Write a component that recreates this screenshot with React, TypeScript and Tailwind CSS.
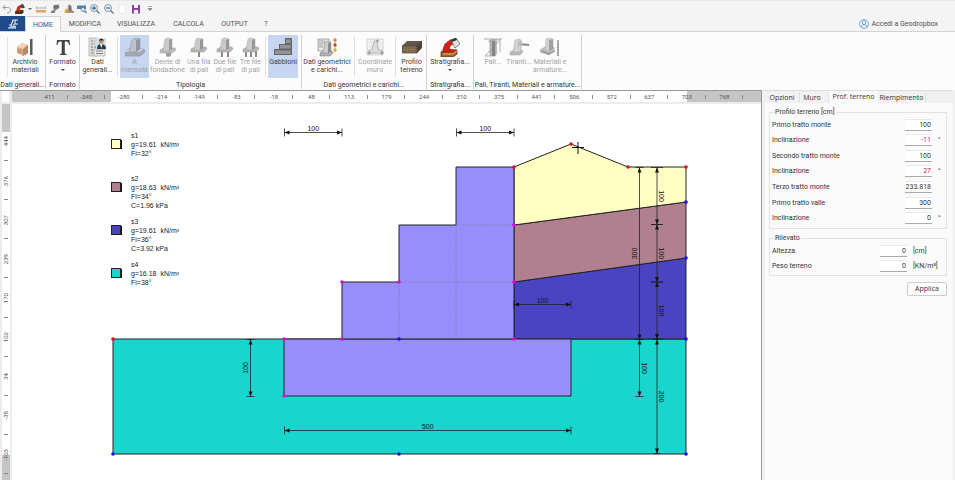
import type { ReactNode } from "react";
import clsx from "clsx";

/* ---------- ribbon icons ---------- */

function Icon({ children, small }: { children: ReactNode; small?: boolean }) {
  return (
    <svg
      viewBox="0 0 20 20"
      className={small ? "h-2.5 w-2.5" : "h-5 w-5"}
      fill="none"
      strokeLinejoin="round"
      aria-hidden="true"
    >
      {children}
    </svg>
  );
}

function WallShape() {
  return (
    <>
      <path d="M0 15 4 12H19L20 15 15 19H0Z" fill="#a3a9b3" stroke="#8d929c" strokeWidth=".6" />
      <path d="M0 15H14L19 12H4Z" fill="#cfd3da" />
      <path d="M7 3 11 1 15 2V12L11 15H4Z" fill="#bcc2cc" stroke="#8d929c" strokeWidth=".6" />
      <path d="M11 3 15 2V12L11 15Z" fill="#8f96a1" />
    </>
  );
}

function PiledWall({ piles }: { piles: number[] }) {
  return (
    <Icon>
      {piles.map((x) => (
        <rect key={x} x={x} y="13" width="2" height="7" fill="#8a8a8a" />
      ))}
      <path d="M2 12 6 10H17L18 12 15 15H2Z" fill="#b5b5b5" stroke="#999" strokeWidth=".5" />
      <path d="M7 2 10 1 14 2V11L11 13H5Z" fill="#cacaca" stroke="#a0a0a0" strokeWidth=".5" />
      <path d="M11 3 14 2V11L11 13Z" fill="#979797" />
    </Icon>
  );
}

const icons = {
  archivio: (
    <Icon>
      <path d="M2 10 7 6 13 8 13 16 8 19 2 15Z" fill="#d6ab83" />
      <path d="M2 10 8 12 13 8 7 6Z" fill="#efd3b4" />
      <path d="M8 12V19L13 16 13 8Z" fill="#b98760" />
      <circle cx="4.500" cy="14.500" r="2.500" fill="#c79a72" />
      <path d="M15 2H17.500V18H15Z" fill="#555" />
      <path d="M16 2V18" stroke="#888" strokeDasharray="1 1" strokeWidth=".6" />
    </Icon>
  ),
  formato: (
    <Icon>
      <path
        d="M4 3H16.500L17 8H16C15.500 5.500 15 4.500 13 4.500H11.800V15.500C11.800 17 12.300 17 13.700 17.300V18H6.800V17.300C8.200 17 8.700 17 8.700 15.500V4.500H7.500C5.500 4.500 5 5.500 4.500 8H3.500Z"
        fill="#454545"
      />
    </Icon>
  ),
  dati: (
    <Icon>
      <path d="M1 1H9V19H1Z" fill="#ddd" stroke="#aaa" strokeWidth=".7" />
      <path d="M3 4H7M3 7H7M3 10H8M3 13H15M3 16H15" stroke="#777" strokeDasharray="2 1" />
      <path d="M6 12H17V19H6Z" fill="#e8e8e8" stroke="#999" strokeWidth=".6" />
      <path d="M8 14H15M8 16.500H15" stroke="#666" strokeWidth=".8" />
      <path d="M8 1H18V12H8Z" fill="#cfe0ec" />
      <path d="M9 12C9 8 11 7 13 7S18 8 18 12Z" fill="#29394a" />
      <path d="M12 7H14.500L13.300 11Z" fill="#fff" />
      <circle cx="13.300" cy="4.500" r="2.300" fill="#c98a62" />
      <path d="M11 4C11 1 16 1 15.600 4L14 3Z" fill="#222" />
    </Icon>
  ),
  mensola: (
    <Icon>
      <WallShape />
    </Icon>
  ),
  dente: (
    <Icon>
      <path d="M8 15H13V19L10 20 8 19Z" fill="#a0a0a0" />
      <path d="M2 13 6 11H17L18 13 14 16H2Z" fill="#bcbcbc" stroke="#999" strokeWidth=".5" />
      <path d="M7 2 10 1 14 2V12L11 14H5Z" fill="#cacaca" stroke="#a0a0a0" strokeWidth=".5" />
      <path d="M11 3 14 2V12L11 14Z" fill="#9d9d9d" />
    </Icon>
  ),
  unaFila: <PiledWall piles={[9]} />,
  dueFile: <PiledWall piles={[6, 12]} />,
  treFile: <PiledWall piles={[4, 9, 14]} />,
  gabbioni: (
    <Icon>
      <path d="M12 1H19V18H1V12H6V7H12Z" fill="#6e6e6e" />
      <path d="M12.500 2H18V6.500H12.500ZM6.500 7.500H18V12H6.500ZM1.500 13H18V17.500H1.500Z" fill="#999" stroke="#5c5c5c" strokeWidth=".8" />
      <path d="M13 4H17M8 10H17M3 15.500H17" stroke="#858585" strokeDasharray="1 1" />
    </Icon>
  ),
  geometrici: (
    <Icon>
      <path d="M1 2H12V14H1Z" fill="#e8e8e8" stroke="#777" strokeWidth=".6" />
      <path d="M2 4H8M2 6H8M2 8H6M2 10H6" stroke="#888" strokeWidth=".7" />
      <path d="M3 16 6 14H15L16 16 13 19H3Z" fill="#b0b0b0" stroke="#777" strokeWidth=".5" />
      <path d="M8 5 11 4 14 5V14L11 16H6Z" fill="#ccc" stroke="#888" strokeWidth=".5" />
      <path d="M11 6 14 5V14L11 16Z" fill="#8e8e8e" />
      <path d="M18 2V15" stroke="#888" strokeWidth=".6" />
      <circle cx="18" cy="3" r="1.700" fill="#d8842b" />
      <circle cx="18" cy="8" r="1.700" fill="#c3402e" />
      <circle cx="18" cy="13" r="1.700" fill="#e3a735" />
    </Icon>
  ),
  coordinate: (
    <Icon>
      <path d="M2 2H18V18H2Z" fill="#f3f3f3" stroke="#bbb" strokeWidth=".6" />
      <path d="M6 2V18M10 2V18M14 2V18M2 6H18M2 10H18M2 14H18" stroke="#d8d8d8" strokeWidth=".5" />
      <path d="M9 4H12L13 13H17V16H4V13H7Z" fill="#ddd" stroke="#aaa" strokeWidth=".8" />
      <path d="M11 4H14M12.500 2.500V5.500M2 16H6M4 14V18M15 16H19M17 14V18" stroke="#888" strokeWidth=".8" />
    </Icon>
  ),
  profilo: (
    <Icon>
      <path d="M0 9 5 4H20L15 9Z" fill="#5f5a48" />
      <path d="M0 9H15V16H0Z" fill="#8c7656" />
      <path d="M15 9 20 4V11L15 16Z" fill="#4d4134" />
      <path d="M0 11H15L20 6M0 14H15L20 9" stroke="#5f4a36" strokeDasharray="2 1" strokeWidth=".8" />
      <path d="M0 9H15V16H0ZM15 9 20 4" stroke="#433b30" strokeWidth=".7" />
    </Icon>
  ),
  stratigrafia: (
    <Icon>
      <path d="M1 15 6 12 17 13V17L13 20H1Z" fill="#9d642e" stroke="#442a18" strokeWidth=".7" />
      <path d="M1 15 6 12 17 13 13 16Z" fill="#c62a1c" />
      <path d="M3 12 5 7 10 3 14 2 13 7 10 9 9 15H3Z" fill="#cf2319" stroke="#801510" strokeWidth=".6" />
      <path d="M11 3 16 1 20 7 15 11Z" fill="#e2e2e2" stroke="#555" strokeWidth=".7" />
      <path d="M11 3 16 1 17 3 12 5Z" fill="#333" />
      <path d="M3 17H13L17 14" stroke="#e8b95a" />
    </Icon>
  ),
  pali: (
    <Icon>
      <path d="M5 4 8 2H15L14 5V17L12 19H7V6Z" fill="#bcbcbc" />
      <path d="M7 4H12V19H7ZM2 2H18M2 19 18 2M2 19H7M1 1 3 3M17 3 19 1M17 2V15" stroke="#9c9c9c" strokeWidth=".8" />
      <path d="M9 4H12V19H9Z" fill="#858585" />
    </Icon>
  ),
  tiranti: (
    <Icon>
      <path d="M1 15 5 13H13L14 15 11 18H1Z" fill="#b9b9b9" stroke="#a3a3a3" strokeWidth=".5" />
      <path d="M6 3 10 2 12 3V13L10 15H4Z" fill="#d2d2d2" stroke="#a9a9a9" strokeWidth=".5" />
      <path d="M9 6 20 7V9L9 8Z" fill="#888" />
      <path d="M9 4H13V9H9Z" fill="#bbb" />
    </Icon>
  ),
  materiali: (
    <Icon>
      <path d="M0 13 5 10H14V14L9 18 0 15Z" fill="#bcbcbc" stroke="#999" strokeWidth=".5" />
      <path d="M6 2 9 1 13 2V12L9 14H5Z" fill="#d2d2d2" stroke="#aaa" strokeWidth=".5" />
      <path d="M9 3 13 2V12L9 14Z" fill="#a2a2a2" />
      <path d="M18 3V19" stroke="#9a9a9a" strokeWidth="2" />
      <path d="M18 3V19" stroke="#ccc" strokeDasharray="1 1" />
      <path d="M2 14 9 17 15 14" stroke="#888" />
    </Icon>
  ),
};

/* ---------- title bar and tabs ---------- */

function QuickButton({ label, width, children }: { label: string; width: string; children: ReactNode }) {
  return (
    <button type="button" aria-label={label} className={clsx("flex h-4 shrink-0 items-center justify-center", width)}>
      {children}
    </button>
  );
}

function Magnifier({ plus }: { plus?: boolean }) {
  return (
    <Icon small>
      <circle cx="8" cy="8" r="7" fill="#e9f3fa" stroke="#6b7886" strokeWidth="1.500" />
      <path d="M13 13 19 19" stroke="#5c6f82" strokeWidth="2.500" />
      <path d={plus ? "M4 8H12M8 4V12" : "M4 8H12"} stroke="#2b6cb0" strokeWidth="2.500" />
    </Icon>
  );
}

function QuickBar() {
  return (
    <div className="flex h-4 items-center border-t border-[#e6e9e9]">
      <QuickButton label="Annulla" width="w-3.5">
        <Icon small>
          <path d="M6 2 2 7 7 11M2 7H11C20 7 19 18 10 18" stroke="#999" strokeWidth="2" />
        </Icon>
      </QuickButton>
      <QuickButton label="Stratigrafia" width="w-3">
        <Icon small>
          <path d="M0 15 5 12H17V17L14 20H0Z" fill="#543024" />
          <path d="M2 14 5 5 15 0 16 6 10 9 10 15Z" fill="#d3271a" />
          <path d="M10 3 16 0 20 7 15 9Z" fill="#4a4038" />
        </Icon>
      </QuickButton>
      <QuickButton label="Altri elementi" width="w-2">
        <svg viewBox="0 0 4 2" className="h-0.5 w-1" aria-hidden="true">
          <path d="M0 0H4L2 2Z" fill="#666" />
        </svg>
      </QuickButton>
      <QuickButton label="Quote" width="w-3.5">
        <Icon small>
          <path d="M1 5V10M19 5V10M1 8H19" stroke="#999" strokeWidth="1.500" />
          <path d="M0 12H20V17H0Z" fill="#d9aa58" />
        </Icon>
      </QuickButton>
      <QuickButton label="Muro" width="w-3.5">
        <Icon small>
          <path d="M7 2 18 1 19 8 12 12 9 18H1L3 13H7Z" fill="#8e8e8e" />
          <path d="M9 4H16L14 8H8ZM3 16H8" stroke="#555" strokeWidth="1.500" />
        </Icon>
      </QuickButton>
      <QuickButton label="Carichi" width="w-3.5">
        <Icon small>
          <path d="M9 1 14 2 17 14H20V18H4V14H6Z" fill="#a1917f" />
          <path d="M0 17 4 8 8 17Z" fill="#dda43c" />
          <path d="M12 4V14" stroke="#615347" strokeWidth="2" />
        </Icon>
      </QuickButton>
      <QuickButton label="Cerca" width="w-3">
        <Icon small>
          <path d="M0 3H18V10H0Z" fill="#4f82b4" />
          <circle cx="12" cy="11" r="4" fill="#dcecf7" stroke="#55718b" strokeWidth="1.500" />
          <path d="M15 14 19 18" stroke="#55718b" strokeWidth="2.500" />
        </Icon>
      </QuickButton>
      <QuickButton label="Ingrandisci" width="w-3.5">
        <Magnifier plus />
      </QuickButton>
      <QuickButton label="Riduci" width="w-3.5">
        <Magnifier />
      </QuickButton>
      <QuickButton label="Sposta" width="w-3">
        <Icon small>
          <path d="M5 18 2 10 5 9V3L8 2 11 1 14 3 17 5V13L14 19Z" fill="#fff" stroke="#d8d8d8" />
        </Icon>
      </QuickButton>
      <QuickButton label="Salva" width="w-4">
        <Icon small>
          <path d="M2 2H18V19H2Z" fill="#8f3fa5" />
          <path d="M6 2H14V8H6ZM6 12H14V19H6Z" fill="#fff" />
        </Icon>
      </QuickButton>
      <QuickButton label="Personalizza" width="w-3">
        <svg viewBox="0 0 6 5" className="h-[5px] w-1.5" aria-hidden="true">
          <path d="M1 .5H5M1 2.500H5L3 4.500Z" fill="#777" stroke="#777" strokeWidth=".6" />
        </svg>
      </QuickButton>
    </div>
  );
}

const menu = [
  { label: "HOME", width: "w-9", active: true },
  { label: "MODIFICA", width: "w-12" },
  { label: "VISUALIZZA", width: "w-[54px]" },
  { label: "CALCOLA", width: "w-[51px]" },
  { label: "OUTPUT", width: "w-[41px]" },
  { label: "?", width: "w-[22px]" },
];

function MenuBar() {
  return (
    <nav className="flex h-4 border-b border-[#d2d2d2] text-[#505050]">
      <button type="button" aria-label="File" className="flex w-[25px] shrink-0 items-center justify-center bg-[#1f4b8c]">
        <svg viewBox="0 0 12 12" className="h-3 w-3" fill="none" stroke="#e5edf8" aria-hidden="true">
          <path d="M11 2H6L4 8M8 2V6H11M1 10H9M2 7H5M7 6V9" strokeWidth="1.200" />
          <path d="M4 8 1 10H9V8Z" fill="#b9cce8" stroke="none" />
        </svg>
      </button>
      {menu.map((item) => (
        <button
          key={item.label}
          type="button"
          className={clsx(
            "shrink-0 pt-px",
            item.width,
            item.active && "-mb-px border-x border-t border-[#d2d2d2] bg-[#fcfcfc] text-[#2b5797]"
          )}
        >
          {item.label}
        </button>
      ))}
      <a href="#accedi" className="mr-[17px] ml-auto flex items-center gap-0.5 pt-px">
        <svg viewBox="0 0 20 20" className="h-2.5 w-2.5" fill="none" stroke="#4b98d3" strokeWidth="1.500" aria-hidden="true">
          <circle cx="10" cy="10" r="9" />
          <circle cx="10" cy="7.500" r="3.500" />
          <path d="M5 16V14C5 10 15 10 15 14V16" />
        </svg>
        Accedi a Geodropbox
      </a>
    </nav>
  );
}

/* ---------- ribbon ---------- */

function RibbonButton({
  icon,
  lines,
  width,
  disabled,
  selected,
  caret,
}: {
  icon: ReactNode;
  lines: string[];
  width: string;
  disabled?: boolean;
  selected?: boolean;
  caret?: boolean;
}) {
  return (
    <button
      type="button"
      disabled={disabled}
      className={clsx(
        "flex h-[43px] shrink-0 flex-col items-center pt-0.5 leading-2 whitespace-nowrap",
        width,
        selected && "bg-[#c6d5f0]",
        disabled ? "text-[#a2a2a2]" : "text-[#404040]"
      )}
    >
      {icon}
      <span className="mt-px block">{lines[0]}</span>
      {lines[1] && <span className="block">{lines[1]}</span>}
      {caret && (
        <svg viewBox="0 0 4 2" className="mt-[3px] h-0.5 w-1" aria-hidden="true">
          <path d="M0 0H4L2 2Z" fill="#444" />
        </svg>
      )}
    </button>
  );
}

function RibbonGroup({ title, width, children }: { title: string; width: string; children: ReactNode }) {
  return (
    <section className={clsx("flex h-[54px] shrink-0 flex-col border-r border-[#d0d0d0]", width)}>
      <div className="flex">{children}</div>
      <h2 className="text-center leading-[14px] whitespace-nowrap text-[#333]">{title}</h2>
    </section>
  );
}

function Divider() {
  return <div className="mx-0.5 mt-0.5 h-10 w-px bg-[#e0e0e0]" />;
}

function Ribbon() {
  return (
    <div className="flex h-[58px] overflow-hidden bg-[#fcfcfc] pt-[3px]">
      <RibbonGroup title="Dati generali..." width="w-[46px]">
        <div className="mt-0.5 ml-[7px] h-10 w-px bg-[#e0e0e0]" />
        <RibbonButton icon={icons.archivio} lines={["Archivio", "materiali"]} width="w-[34px]" />
      </RibbonGroup>
      <RibbonGroup title="Formato" width="w-[34px]">
        <RibbonButton icon={icons.formato} lines={["Formato"]} width="w-[33px]" caret />
      </RibbonGroup>
      <RibbonGroup title="Tipologia" width="w-[222px]">
        <RibbonButton icon={icons.dati} lines={["Dati", "generali..."]} width="w-[35px]" />
        <Divider />
        <RibbonButton icon={icons.mensola} lines={["A", "mensola"]} width="w-[29px]" disabled selected />
        <RibbonButton icon={icons.dente} lines={["Dente di", "fondazione"]} width="w-[37px]" disabled />
        <RibbonButton icon={icons.unaFila} lines={["Una fila", "di pali"]} width="w-[26px]" disabled />
        <RibbonButton icon={icons.dueFile} lines={["Due file", "di pali"]} width="w-[26px]" disabled />
        <RibbonButton icon={icons.treFile} lines={["Tre file", "di pali"]} width="w-[25px]" disabled />
        <Divider />
        <RibbonButton icon={icons.gabbioni} lines={["Gabbioni"]} width="w-[30px]" selected />
      </RibbonGroup>
      <RibbonGroup title="Dati geometrici e carichi..." width="w-[125px]">
        <RibbonButton icon={icons.geometrici} lines={["Dati geometrici", "e carichi..."]} width="w-[50px]" />
        <Divider />
        <RibbonButton icon={icons.coordinate} lines={["Coordinate", "muro"]} width="w-[36px]" disabled />
        <Divider />
        <RibbonButton icon={icons.profilo} lines={["Profilo", "terreno"]} width="w-[27px]" />
      </RibbonGroup>
      <RibbonGroup title="Stratigrafia..." width="w-[47px]">
        <RibbonButton icon={icons.stratigrafia} lines={["Stratigrafia..."]} width="w-[46px]" caret />
      </RibbonGroup>
      <RibbonGroup title="Pali, Tiranti, Materiali e armature..." width="w-[108px]">
        <div className="w-1.5" />
        <RibbonButton icon={icons.pali} lines={["Pali..."]} width="w-[26px]" disabled />
        <RibbonButton icon={icons.tiranti} lines={["Tiranti..."]} width="w-[26px]" disabled />
        <RibbonButton icon={icons.materiali} lines={["Materiali e", "armature..."]} width="w-[36px]" disabled />
      </RibbonGroup>
    </div>
  );
}

/* ---------- rulers ---------- */

const xMarks = [-411, -345, -280, -214, -149, -83, -18, 48, 113, 179, 244, 310, 375, 441, 506, 572, 637, 703, 768];
const yMarks = [444, 376, 307, 239, 170, 102, 34, -35, -103];

function TopRuler() {
  return (
    <div className="flex h-[13px] bg-[#ececec] pb-0.5">
      <div className="mr-[3px] ml-0.5 w-[7px] shrink-0 bg-white" />
      <div className="flex min-w-0 flex-1 items-center bg-[linear-gradient(90deg,#c5c5c5_13.200%,#fff_13.200%,#fff_90.100%,#c5c5c5_90.100%)] px-[18px] text-[6px] text-[#555]">
        {xMarks.map((mark) => (
          <div key={mark} className="relative flex-1 text-center">
            {mark}
            <span className="absolute top-1/2 right-0 -mt-0.5 h-1 w-px bg-[#888]" />
          </div>
        ))}
      </div>
    </div>
  );
}

function LeftRuler() {
  return (
    <div className="flex w-3 shrink-0 flex-col border-x-2 border-[#ececec] bg-[linear-gradient(180deg,#c5c5c5_7.500%,#fff_7.500%,#fff_93.300%,#c5c5c5_93.300%)] pt-[18px] pb-[6px] text-[6px] text-[#555]">
      {yMarks.map((mark) => (
        <div key={mark} className="relative flex flex-1 items-center justify-center">
          <span className="rotate-180 leading-2 [writing-mode:vertical-rl]">{mark}</span>
          <span className="absolute bottom-0 left-1/2 -ml-0.5 h-px w-1 bg-[#888]" />
        </div>
      ))}
    </div>
  );
}

/* ---------- section drawing ---------- */

function HDim({ x1, x2, y, label }: { x1: number; x2: number; y: number; label: string }) {
  return (
    <g>
      <path d={`M${x1} ${y}H${x2}M${x1} ${y - 4}V${y + 4}M${x2} ${y - 4}V${y + 4}`} stroke="#222" strokeWidth=".8" />
      <path d={`M${x1} ${y}l5 -2v4ZM${x2} ${y}l-5 -2v4Z`} fill="#111" />
      <text x={(x1 + x2) / 2} y={y - 2} textAnchor="middle">
        {label}
      </text>
    </g>
  );
}

function VDim({ x, y1, y2, label, flip, cap = 4 }: { x: number; y1: number; y2: number; label: string; flip?: boolean; cap?: number }) {
  const mid = (y1 + y2) / 2;
  const tx = flip ? x - 3 : x + 2;
  return (
    <g>
      <path d={`M${x} ${y1}V${y2}M${x - cap} ${y1}H${x + cap}M${x - cap} ${y2}H${x + cap}`} stroke="#222" strokeWidth=".8" />
      <path d={`M${x} ${y1}l-2 5h4ZM${x} ${y2}l-2 -5h4Z`} fill="#111" />
      <text x={tx} y={mid} textAnchor="middle" transform={`rotate(${flip ? -90 : 90} ${tx} ${mid})`}>
        {label}
      </text>
    </g>
  );
}

const strata = [
  { name: "s1", color: "#ffffc3", y: 139, rows: ["g=19.61\u00a0 kN/m³", "Fi=32°"] },
  { name: "s2", color: "#b08090", y: 182, rows: ["g=18.63\u00a0 kN/m³", "Fi=34°", "C=1.96 kPa"] },
  { name: "s3", color: "#4b44c2", y: 225, rows: ["g=19.61\u00a0 kN/m³", "Fi=36°", "C=3.92 kPa"] },
  { name: "s4", color: "#18d6cd", y: 268, rows: ["g=16.18\u00a0 kN/m³", "Fi=38°"] },
];

const points = [
  { color: "#e01020", at: [[113, 339], [514, 167], [571, 144], [628, 167], [686, 167]] },
  { color: "#e800d8", at: [[284, 339], [342, 339], [342, 282], [399, 282], [514, 225], [514, 282], [514, 339], [284, 396]] },
  { color: "#1010f0", at: [[399, 339], [399, 454], [113, 454], [686, 202], [686, 258], [686, 339], [686, 454]] },
];

function Section() {
  return (
    <svg
      viewBox="12 104 749 376"
      preserveAspectRatio="xMinYMin meet"
      className="block min-w-0 flex-1 self-start bg-white font-['Liberation_Sans',sans-serif] text-[7px]"
      fill="none"
      role="img"
      aria-label="Sezione del muro"
    >
      <g stroke="#222" strokeWidth="1">
        <path d="M113 339H686V454H113Z" fill="#18d6cd" />
        <path d="M514 282 686 258V339H514Z" fill="#4b44c2" />
        <path d="M514 225 686 202V258L514 282Z" fill="#b08090" />
        <path d="M514 167 571 144 628 167H686V202L514 225Z" fill="#ffffc3" />
        <path d="M284 339H571V396H284Z" fill="#978dfb" />
        <path d="M342 339V282H399V225H456V167H514V339Z" fill="#978dfb" />
      </g>
      <path d="M399 282V339M456 225V339M456 225H514M399 282H514" stroke="#8580b5" strokeDasharray="2 1" strokeWidth=".8" />

      <g fill="#111">
        <HDim x1={284.5} x2={342} y={132.5} label="100" />
        <HDim x1={456.5} x2={514} y={132.5} label="100" />
        <HDim x1={514} x2={571} y={304.5} label="100" />
        <HDim x1={284.5} x2={571} y={430.5} label="500" />
        <VDim x={250.5} y1={339.5} y2={396.5} label="100" flip />
        <VDim x={639.5} y1={167.5} y2={339.5} label="300" flip />
        <VDim x={639.5} y1={339.5} y2={396.5} label="100" />
        <VDim x={657} y1={167.5} y2={224.5} label="100" cap={6} />
        <VDim x={657} y1={224.5} y2={282} label="100" cap={6} />
        <VDim x={657} y1={282} y2={339} label="100" cap={6} />
        <VDim x={657} y1={339.5} y2={453.5} label="200" cap={3} />
      </g>

      {points.map((group) =>
        group.at.map(([x, y]) => <circle key={`${x}-${y}`} cx={x} cy={y} r="1.800" fill={group.color} />)
      )}

      {/* crosshair */}
      <path d="M572 147.500H584M578 142V154" stroke="#111" strokeWidth="1" />

      {strata.map((s) => (
        <g key={s.name} fill="#222">
          <rect x="113" y={s.y + 1} width="9" height="9" fill="#111" />
          <rect x="111.500" y={s.y + 0.5} width="9" height="9" fill={s.color} stroke="#222" />
          <text x="131" y={s.y - 1}>
            {s.name}
          </text>
          {s.rows.map((row, i) => (
            <text key={row} x="131" y={s.y + 8 + i * 9}>
              {row}
            </text>
          ))}
        </g>
      ))}
    </svg>
  );
}

/* ---------- side panel ---------- */

const profile = [
  { id: "monte1", label: "Primo tratto monte", value: "100" },
  { id: "incl1", label: "Inclinazione", value: "-11", unit: "°", color: "text-[#b5179e]" },
  { id: "monte2", label: "Secondo tratto monte", value: "100" },
  { id: "incl2", label: "Inclinazione", value: "27", unit: "°", color: "text-[#c2185b]" },
  { id: "monte3", label: "Terzo tratto monte", value: "233.818" },
  { id: "valle1", label: "Primo tratto valle", value: "300" },
  { id: "incl3", label: "Inclinazione", value: "0", unit: "°" },
];

const fill = [
  { id: "altezza", label: "Altezza", value: "0", unit: "[cm]" },
  { id: "peso", label: "Peso terreno", value: "0", unit: "[KN/m³]" },
];

function Field({
  id,
  label,
  value,
  unit,
  color = "text-[#333]",
  unitWidth,
}: {
  id: string;
  label: string;
  value: string;
  unit?: string;
  color?: string;
  unitWidth: string;
}) {
  return (
    <div className="flex items-center">
      <label htmlFor={id} className="flex-1">
        {label}
      </label>
      <input
        id={id}
        type="text"
        defaultValue={value}
        className={clsx("h-3 w-[27px] border-t border-b border-t-[#e8e8e8] border-b-[#aaa] bg-white pr-px text-right", color)}
      />
      <span className={clsx("shrink-0 pl-1.5 whitespace-nowrap", unitWidth)}>{unit}</span>
    </div>
  );
}

function SidePanel() {
  const tab = "h-[11px] border-r border-[#e0e0e0] bg-[#f2f2f2]";
  return (
    <aside className="flex w-[194px] shrink-0 flex-col border-l border-[#999] bg-[#f0f0f0] pr-0.5 pl-[3px] text-[#333]">
      <div className="flex h-[13px] items-end border-t border-[#ddd] font-['Open_Sans',sans-serif]">
        <button type="button" className={clsx(tab, "w-[35px]")}>
          Opzioni
        </button>
        <button type="button" className={clsx(tab, "w-[29px] pr-1")}>
          Muro
        </button>
        <button type="button" className="h-3 w-[49px] bg-[#fafafa] pb-px">
          Prof. terreno
        </button>
        <button type="button" className={clsx(tab, "w-12")}>
          Riempimento
        </button>
      </div>
      <div className="flex-1 bg-[#fafafa] pt-1 pr-1.5 pl-1">
        <fieldset className="border border-[#e2e2e2] px-0.5 pb-0.5">
          <legend className="ml-0.5 px-px leading-[10px]">Profilo terreno [cm]</legend>
          <div className="grid h-[109px] auto-rows-fr">
            {profile.map((row) => (
              <Field key={row.id} {...row} unitWidth="w-3" />
            ))}
          </div>
        </fieldset>
        <fieldset className="mt-1 border border-[#e2e2e2] px-0.5 pb-px">
          <legend className="ml-0.5 px-px leading-[10px]">Rilevato</legend>
          <div className="grid h-[31px] auto-rows-fr">
            {fill.map((row) => (
              <Field key={row.id} {...row} unitWidth="w-[37px]" />
            ))}
          </div>
        </fieldset>
        <button
          type="button"
          className="mt-1.5 ml-auto block h-3.5 w-10 rounded-[2px] border border-[#ccc] bg-[#fdfdfd] font-['Open_Sans',sans-serif] leading-3"
        >
          Applica
        </button>
      </div>
    </aside>
  );
}

export default function App() {
  return (
    <div className="flex h-screen flex-col overflow-hidden bg-[#f4f4f4] font-[Roboto,sans-serif] text-[7px] leading-[10px]">
      <header className="shrink-0">
        <QuickBar />
        <MenuBar />
        <Ribbon />
      </header>
      <main className="flex min-h-0 flex-1">
        <div className="flex min-w-0 flex-1 flex-col border-t border-[#999]">
          <TopRuler />
          <div className="flex min-h-0 flex-1 bg-white">
            <LeftRuler />
            <Section />
          </div>
        </div>
        <SidePanel />
      </main>
    </div>
  );
}
